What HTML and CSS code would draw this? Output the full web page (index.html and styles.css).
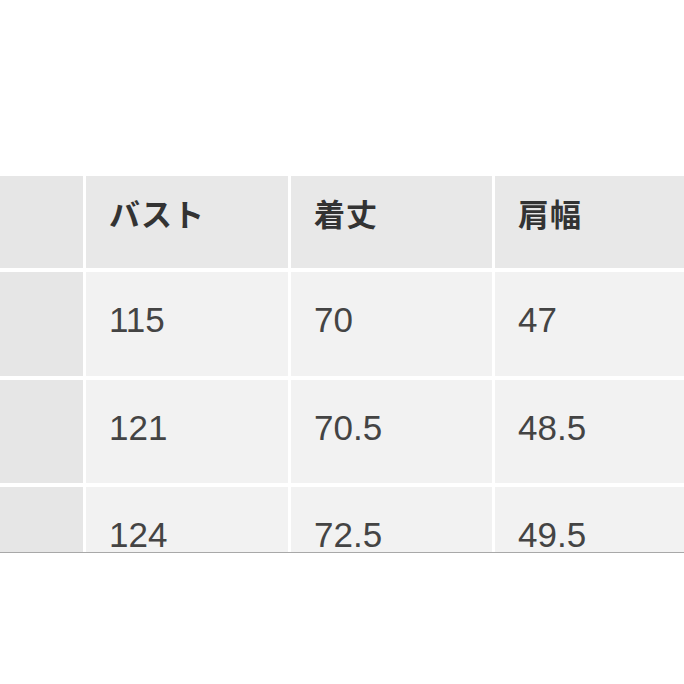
FILE: index.html
```html
<!DOCTYPE html>
<html lang="ja">
<head>
<meta charset="utf-8">
<title>サイズ表</title>
<link rel="stylesheet" href="styles.css">
</head>
<body>
<div class="table">
  <div class="cell side"></div>
  <div class="cell head">バスト</div>
  <div class="cell head">着丈</div>
  <div class="cell head">肩幅</div>

  <div class="cell side"></div>
  <div class="cell num">115</div>
  <div class="cell num">70</div>
  <div class="cell num">47</div>

  <div class="cell side"></div>
  <div class="cell num">121</div>
  <div class="cell num">70.5</div>
  <div class="cell num">48.5</div>

  <div class="cell side"></div>
  <div class="cell num">124</div>
  <div class="cell num">72.5</div>
  <div class="cell num">49.5</div>
</div>
</body>
</html>
```
FILE: styles.css
```css
html, body {
  margin: 0;
  padding: 0;
  background: #ffffff;
}
body {
  padding-top: 176px;
  font-family: "Liberation Sans", "Noto Sans CJK JP", sans-serif;
}
.table {
  display: grid;
  grid-template-columns: 83px 202px 201px 1fr;
  grid-template-rows: 92px 104px 103px 104px;
  column-gap: 3px;
  row-gap: 4px;
  height: 376px;
  overflow: hidden;
  border-bottom: 1px solid #a8a8a8;
}
.cell {
  background: #f2f2f2;
  padding-left: 23px;
  color: #3c3c3c;
}
.side {
  background: #e6e6e6;
}
.head {
  background: #e8e8e8;
  font-family: "Noto Sans CJK JP", sans-serif;
  font-weight: 700;
  font-size: 31px;
  line-height: 1;
  padding-top: 21px;
  color: #333333;
  letter-spacing: 1px;
}
.num {
  font-size: 35px;
  line-height: 1;
  padding-top: 30px;
  color: #444444;
}
```
